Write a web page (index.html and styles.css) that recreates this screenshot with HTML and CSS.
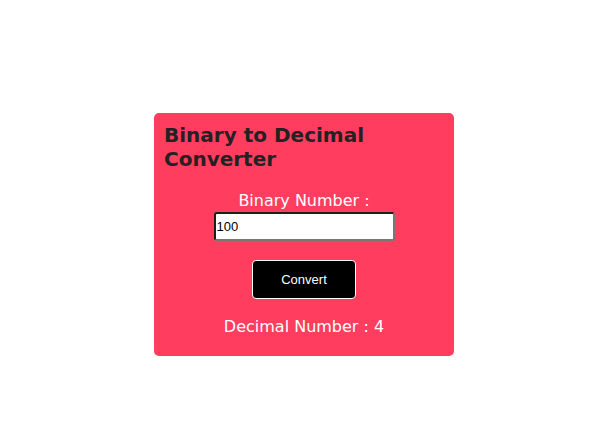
FILE: index.html
```html
<!DOCTYPE html>
<html>
<head>
<meta charset="utf-8">
<link rel="stylesheet" href="styles.css">
</head>
<body>
<div class="page">
  <div class="card">
    <h2 class="title">Binary to Decimal Converter</h2>
    <div class="form">
      <label class="label" for="bin">Binary Number :</label>
      <input class="input" id="bin" type="text" value="100">
      <button class="btn">Convert</button>
      <p class="result">Decimal Number : 4</p>
    </div>
  </div>
</div>
</body>
</html>
```
FILE: styles.css
```css
html, body {
  margin: 0;
  padding: 0;
  background: #fff;
}
.page {
  padding-top: 113px;
  padding-left: 154px;
}
.card {
  width: 300px;
  box-sizing: border-box;
  background: #ff3d5e;
  border-radius: 5px;
  padding: 10px 10px 19px 10px;
  font-family: "DejaVu Sans", sans-serif;
}
.title {
  margin: 0;
  font-size: 20px;
  line-height: 24px;
  font-weight: bold;
  color: #222;
}
.form {
  display: flex;
  flex-direction: column;
  align-items: center;
  padding-top: 20px;
}
.label {
  color: #fff;
  font-size: 16px;
  line-height: 20px;
}
.input {
  margin-top: 1px;
  width: 181px;
  height: 29px;
  box-sizing: border-box;
  border-style: solid;
  border-width: 2px;
  border-color: #1e1e1e #777 #777 #1e1e1e;
  border-radius: 3px;
  padding: 0 0 0 1px;
  font-family: "Liberation Sans", Arial, sans-serif;
  font-size: 13px;
  color: #000;
  background: #fff;
}
.btn {
  margin-top: 19px;
  width: 104px;
  height: 39px;
  box-sizing: border-box;
  background: #000;
  color: #fff;
  border: 1px solid #fff;
  border-radius: 4px;
  font-family: "Liberation Sans", Arial, sans-serif;
  font-size: 13px;
}
.result {
  margin: 18px 0 0;
  color: #fff;
  font-size: 16px;
  line-height: 20px;
}
```
